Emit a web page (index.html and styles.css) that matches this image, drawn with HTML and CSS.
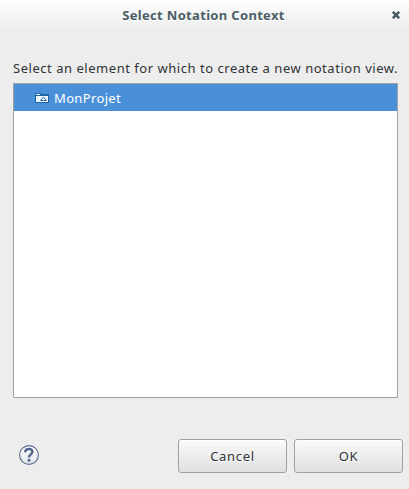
FILE: index.html
```html
<!DOCTYPE html>
<html lang="en">
<head>
<meta charset="utf-8">
<title>Select Notation Context</title>
<link rel="stylesheet" href="styles.css">
</head>
<body>
<div class="dialog">
  <header class="titlebar">
    <h1 class="title"><span>Select Notation Context</span></h1>
    <svg class="close" width="8" height="8" viewBox="0 0 8 8"><path d="M.8 .8L7.2 7.2M7.2 .8L.8 7.2" stroke="#4a5e66" stroke-width="2.6"/></svg>
  </header>
  <main class="content">
    <p class="prompt"><span>Select an element for which to create a new notation view.</span></p>
    <div class="tree">
      <div class="row">
        <svg class="folder" width="14" height="10" viewBox="0 0 14 10">
          <path d="M0 0H6V1H14V10H0Z" fill="#1b67a4"/>
          <path d="M1 1H5V2H1ZM1 3H13V9H1Z" fill="#eef5fb"/>
          <path d="M5.5 7.5L8.5 4L11.5 7.5Z" fill="#fff" stroke="#286ca5"/>
        </svg>
        <span class="name">MonProjet</span>
      </div>
    </div>
  </main>
  <footer class="actions">
    <svg class="help" width="20" height="20" viewBox="0 0 20 20">
      <defs><linearGradient id="disc" x2="0" y2="1"><stop stop-color="#fff"/><stop offset="1" stop-color="#e4e5e8"/></linearGradient></defs>
      <circle cx="10" cy="10" r="9.4" fill="url(#disc)" stroke="#586b8f" stroke-width="1.1"/>
      <path d="M6.2 7.2C6.2 2.9 13.4 2.8 13.4 6.8C13.4 9.5 10 9.3 10 12.5" fill="none" stroke="#52658a" stroke-width="2.5"/>
      <circle cx="10" cy="15.3" r="1.5" fill="#52658a"/>
    </svg>
    <button class="button"><span>Cancel</span></button>
    <button class="button"><span>OK</span></button>
  </footer>
</div>
</body>
</html>
```
FILE: styles.css
```css
* { box-sizing: border-box; }
body {
  margin: 0;
  background: #ededed;
  color: #2e3436;
  font: 13px/18px "Noto Sans", "Open Sans", sans-serif;
}
.dialog {
  height: 489px;
  display: flex;
  flex-direction: column;
  background: linear-gradient(#fdfdfd, #ededed 32px);
}
.titlebar {
  height: 32px;
  display: grid;
  grid-template-columns: 1fr 8px;
  padding: 6px 9px 0 15px;
}
.title {
  margin: 0;
  font-size: 13px;
  line-height: 18px;
  font-weight: 700;
  letter-spacing: 0.32px;
  color: #4a5e66;
  text-align: center;
  text-shadow: 0 1px #fff;
}
.close { margin-top: 5px; }
.content { padding: 27px 11px 0 13px; }
.prompt {
  margin: 0 0 6px;
  white-space: nowrap;
  letter-spacing: 0.53px;
}
.tree {
  height: 315px;
  border: 1px solid #a1a1a1;
  background: #fff;
}
.row {
  height: 27px;
  display: flex;
  align-items: center;
  padding: 0 0 0 21px;
  gap: 5px;
  background: #4a90d9;
  color: #fff;
}
.folder { margin-top: 1px; }
.name { padding-top: 1px; letter-spacing: 0.35px; }
.actions {
  display: flex;
  align-items: flex-start;
  gap: 7px;
  padding: 41px 6px 0 19px;
}
.help { margin: 6px auto 0 0; }
.button {
  width: 109px;
  height: 34px;
  border: 1px solid #a1a1a1;
  border-radius: 3px;
  background: linear-gradient(#fafafa, #e0e0e0);
  box-shadow: inset 0 1px #fff;
  color: #2e3436;
  font: inherit;
  letter-spacing: 0.7px;
  padding: 0;
  text-shadow: 0 1px #fff;
}
```
